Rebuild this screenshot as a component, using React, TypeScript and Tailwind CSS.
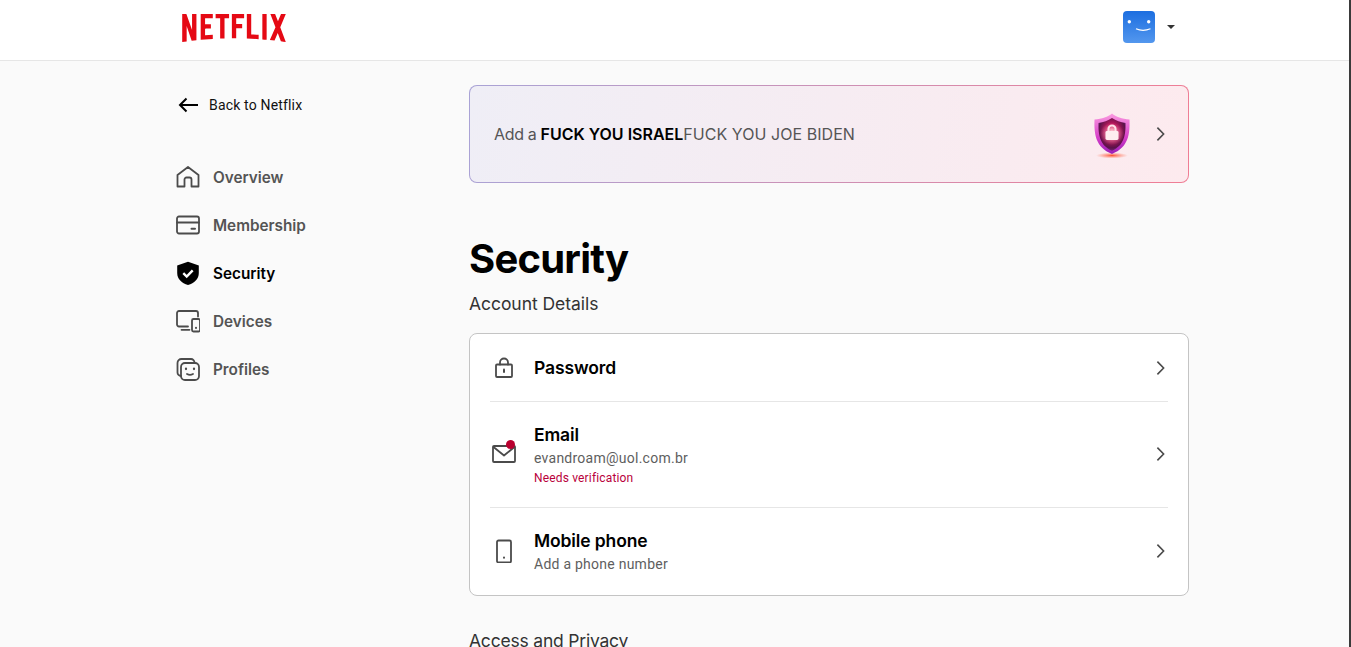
import React from "react";

const logo =
  "M105.06233,14.2806261 L110.999156,30 C109.249227,29.7497422 107.500234,29.4366857 105.718437,29.1554972 L102.374168,20.4686475 L98.9371075,28.4375293 C97.2499766,28.1563408 95.5928391,28.061674 93.9057081,27.8432843 L99.9372012,14.0931671 L94.4680851,0 L99.5313525,0 L102.593495,7.87421502 L105.874965,0 L110.999156,0 L105.06233,14.2806261 Z M90.4686475,0 L85.8749649,0 L85.8749649,27.2499766 C87.3746368,27.3437061 88.9371075,27.4055675 90.4686475,27.5930265 L90.4686475,0 Z M81.9055207,26.93692 C77.7186241,26.6557316 73.5307901,26.4064111 69.250164,26.3117443 L69.250164,0 L73.9366389,0 L73.9366389,21.8745899 C76.6248008,21.9373887 79.3120255,22.1557784 81.9055207,22.2804387 L81.9055207,26.93692 Z M64.2496954,10.6561065 L64.2496954,15.3435186 L57.8442216,15.3435186 L57.8442216,25.9996251 L53.2186709,25.9996251 L53.2186709,0 L66.3436123,0 L66.3436123,4.68741213 L57.8442216,4.68741213 L57.8442216,10.6561065 L64.2496954,10.6561065 Z M45.3435186,4.68741213 L45.3435186,26.2498828 C43.7810479,26.2498828 42.1876465,26.2498828 40.6561065,26.3117443 L40.6561065,4.68741213 L35.8121661,4.68741213 L35.8121661,0 L50.2183897,0 L50.2183897,4.68741213 L45.3435186,4.68741213 Z M30.749836,15.5928391 C28.687787,15.5928391 26.2498828,15.5928391 24.4999531,15.6875059 L24.4999531,22.6562939 C27.2499766,22.4678976 30,22.2495079 32.7809542,22.1557784 L32.7809542,26.6557316 L19.812541,27.6876933 L19.812541,0 L32.7809542,0 L32.7809542,4.68741213 L24.4999531,4.68741213 L24.4999531,10.9991564 C26.3126816,10.9991564 29.0936358,10.9054269 30.749836,10.9054269 L30.749836,15.5928391 Z M4.78114163,12.9684132 L4.78114163,29.3429562 C3.09401069,29.5313525 1.59340144,29.7497422 0,30 L0,0 L4.4690224,0 L10.562377,17.0315868 L10.562377,0 L15.2497891,0 L15.2497891,28.061674 C13.5935889,28.3437998 11.906458,28.4375293 10.1246602,28.6868498 L4.78114163,12.9684132 Z";

const Ic = ({ children, cls = "" }: { children: React.ReactNode; cls?: string }) => (
  <svg viewBox="0 0 24 24" width="24" height="24" fill="none" stroke="#4b4b4b" strokeWidth="1.8" strokeLinejoin="round" strokeLinecap="round" className={"shrink-0 " + cls}>
    {children}
  </svg>
);

const Chevron = ({ cls = "" }: { cls?: string }) => (
  <svg viewBox="0 0 16 16" width="16" height="16" fill="none" stroke="#4a4a4a" strokeWidth="1.6" className={"shrink-0 " + cls}>
    <path d="M5.400 1.600 11.600 8l-6.200 6.400" />
  </svg>
);

const nav = [
  { label: "Overview", icon: <Ic><path d="M1.500 10 12 2l10.500 8v11.500h-7v-7a2 2 0 0 0-2-2h-3a2 2 0 0 0-2 2v7h-7z" /></Ic> },
  { label: "Membership", icon: <Ic><rect x="1" y="3.500" width="22" height="17" rx="2" /><path d="M1 9.500h22" /><path d="M15.500 15.800h3.500" strokeWidth="2" /></Ic> },
  {
    label: "Security",
    active: true,
    icon: (
      <svg viewBox="0 0 24 24" width="24" height="24" className="shrink-0">
        <path fill="#000" d="M12 .8 22.800 4.500V12c0 6-4.500 10-10.800 12C5.700 22 1.200 18 1.200 12V4.500z" />
        <path fill="none" stroke="#fff" strokeWidth="2.400" d="m7.300 12.200 3.400 3.300 6-6.200" />
      </svg>
    ),
  },
  { label: "Devices", icon: <Ic><path d="M12 17.500H3a2 2 0 0 1-2-2V4a2 2 0 0 1 2-2h17a2 2 0 0 1 2 2v3.500" /><path d="M5.500 20.800h8" /><rect x="16" y="10" width="8" height="12.500" rx="1.500" /><path d="M20 18.800v.1" strokeWidth="2" /></Ic> },
  { label: "Profiles", icon: <Ic><path d="M5 19a3.500 3.500 0 0 1-3.500-3.500V6A4 4 0 0 1 5.500 2H15a3.500 3.500 0 0 1 3.500 3.500" /><rect x="5" y="6" width="18" height="17" rx="4" /><path d="M10 11.500v.6M18 11.500v.6" strokeWidth="2.200" /><path d="M11 17c1.800 1 4.200 1 6 0" /></Ic> },
];

const Shield = () => (
  <svg viewBox="0 0 44 50" width="44" height="50" className="shrink-0">
    <defs>
      <linearGradient id="rim" x1="0" y1="0" x2="0" y2="1">
        <stop offset="0" stopColor="#fb9be0" />
        <stop offset="0.6" stopColor="#d63ec8" />
        <stop offset="1" stopColor="#9a1fb8" />
      </linearGradient>
      <radialGradient id="core" cx="0.5" cy="0.42" r="0.62">
        <stop offset="0" stopColor="#ff9aa6" />
        <stop offset="0.35" stopColor="#c4175e" />
        <stop offset="0.8" stopColor="#5a1248" />
        <stop offset="1" stopColor="#7a2a86" />
      </radialGradient>
      <radialGradient id="glow" cx="0.5" cy="0.5" r="0.5">
        <stop offset="0" stopColor="#ff4a2c" stopOpacity="0.95" />
        <stop offset="1" stopColor="#ff7a5c" stopOpacity="0" />
      </radialGradient>
      <radialGradient id="halo" cx="0.5" cy="0.5" r="0.5">
        <stop offset="0" stopColor="#fff" stopOpacity="0.85" />
        <stop offset="1" stopColor="#ff9ab0" stopOpacity="0" />
      </radialGradient>
    </defs>
    <ellipse cx="23" cy="46.500" rx="16" ry="3" fill="url(#glow)" />
    <g transform="translate(1 3.500) scale(1 .93)">
      <path fill="url(#rim)" d="M22 1c4 3.500 10 6 17.500 6.500.5 15.500-1 30-17.500 37C5.500 37.500 4 23 4.500 7.500 12 7 18 4.500 22 1z" />
      <path fill="url(#core)" d="M22 6c4 2.800 8.500 4.500 13.500 5.200.3 12-1 24-13.500 29.800C9.500 35.200 8.200 23.200 8.500 11.200 13.500 10.500 18 8.800 22 6z" />
      <circle cx="22" cy="23" r="12" fill="url(#halo)" />
      <path fill="none" stroke="#ffe2e8" strokeWidth="2" d="M18.500 20v-2.500a3.500 3.500 0 0 1 7 0V20" />
      <rect x="15.500" y="20" width="13" height="9.500" rx="1.500" fill="#ffeef0" />
    </g>
  </svg>
);

const Row = ({ icon, title, sub, note, cls, chev = "" }: { icon: React.ReactNode; title: string; sub?: string; note?: string; cls: string; chev?: string }) => (
  <div className={"flex items-center pr-5 " + cls}>
    <div className="w-[64px] flex justify-center pl-[4px]">{icon}</div>
    <div className="flex-1 min-w-0">
      <div className="font-['Inter',sans-serif] font-semibold text-[17.5px] leading-[24px] tracking-[-0.12px] text-black">{title}</div>
      {sub && <div className="font-['Roboto',sans-serif] text-[14px] leading-[20px] tracking-[0.25px] text-[#5e5e5e] mt-[1px]">{sub}</div>}
      {note && <div className="font-['Roboto',sans-serif] text-[12px] leading-[16px] tracking-[0.16px] text-[#b9003b] mt-[2px]">{note}</div>}
    </div>
    <Chevron cls={chev} />
  </div>
);

export default function App() {
  return (
    <div className="h-[647px] overflow-hidden flex font-['Inter',sans-serif]">
      <div className="flex-1 min-w-0 bg-[#fafafa]">
        <header className="h-[61px] bg-white border-b border-[#e6e6e6] flex items-center pl-[182px] pr-[174px]">
          <svg viewBox="0 0 111 30" width="104" height="28" fill="#e50914" className="shrink-0 mt-[-4px]">
            <path d={logo} />
          </svg>
          <div className="ml-auto flex items-center gap-[12px] mt-[-7px]">
            <svg viewBox="0 0 32 32" width="32" height="32" className="shrink-0 rounded-[4px]">
              <defs>
                <linearGradient id="av" x1="0" y1="0" x2="0" y2="1">
                  <stop offset="0" stopColor="#1c6ee0" />
                  <stop offset="1" stopColor="#5397ee" />
                </linearGradient>
              </defs>
              <rect width="32" height="32" fill="url(#av)" />
              <circle cx="6.300" cy="10.700" r="1.700" fill="#fff" />
              <circle cx="25.700" cy="10.700" r="1.700" fill="#fff" />
              <path d="M13 17.800c4 1.800 10 1.800 14.500 0" fill="none" stroke="#fff" strokeWidth="1.200" />
            </svg>
            <span className="w-0 h-0 border-x-[4px] border-x-transparent border-t-[4px] border-t-[#333]" />
          </div>
        </header>
        <div className="flex pl-[176px]">
          <aside className="w-[293px] shrink-0">
            <div className="flex items-center h-[24px] mt-[32px] pl-[2px] gap-[11px]">
              <svg viewBox="0 0 20 16" width="20" height="16" fill="none" stroke="#000" strokeWidth="2" className="shrink-0">
                <path d="M8.500 1.500 2 8l6.500 6.500M2 8h18" />
              </svg>
              <span className="font-['Roboto',sans-serif] text-[14px] text-[#111] tracking-[0.17px]">Back to Netflix</span>
            </div>
            <nav className="mt-[36px] flex flex-col">
              {nav.map((n) => (
                <div key={n.label} className="flex items-center h-[48px] gap-[13px]">
                  {n.icon}
                  <span className={"text-[15.3px] leading-[24px] mt-[2px] font-semibold " + (n.active ? "text-black" : "text-[#545454]")}>{n.label}</span>
                </div>
              ))}
            </nav>
          </aside>
          <main className="w-[720px] shrink-0 pt-[24px]">
            <div className="h-[98px] rounded-[8px] border border-transparent [background:linear-gradient(100deg,#efeef6,#fdeaee)_padding-box,linear-gradient(100deg,#a9a3d6,#f07d94)_border-box] flex items-center pl-[24px] pr-[20px]">
              <div className="text-[16px] text-[#555] flex-1 tracking-[0.05px]">
                <span className="tracking-[-0.35px]">Add a </span><span className="font-semibold text-black tracking-[0px]">FUCK YOU ISRAEL</span>FUCK YOU JOE BIDEN
              </div>
              <Shield />
              <div className="ml-[19px]"><Chevron /></div>
            </div>
            <h1 className="mt-[51px] text-[40px] leading-[50px] font-bold tracking-[-0.78px] text-black">Security</h1>
            <h2 className="mt-[8px] text-[17.5px] leading-[24px] tracking-[-0.05px] text-[#333]">Account Details</h2>
            <div className="mt-[17px] bg-white border border-[#c4c4c4] rounded-[8px]">
              <Row
                cls="h-[67px]"
                title="Password"
                icon={<Ic><rect x="4" y="8.500" width="16" height="12.500" rx="1" /><path d="M8 8.500V6.500a4 4 0 0 1 8 0v2" /><path d="M12 13.500v2.500" strokeWidth="2" /></Ic>}
              />
              <div className="h-px bg-[#e6e6e6] mx-[20px]" />
              <Row
                cls="h-[105px]"
                chev="mb-[2px]"
                title="Email"
                sub="evandroam@uol.com.br"
                note="Needs verification"
                icon={
                  <div className="relative w-[24px] h-[24px] mb-[2px]">
                    <Ic><rect x="1" y="4" width="22" height="16" rx="1" /><path d="m1.500 5 10.500 8.500L22.500 5" /></Ic>
                    <span className="absolute left-[14px] top-[-2px] w-[9px] h-[9px] rounded-full bg-[#b9002f]" />
                  </div>
                }
              />
              <div className="h-px bg-[#e6e6e6] mx-[20px]" />
              <Row
                cls="h-[87px]"
                chev="mb-[2px]"
                title="Mobile phone"
                sub="Add a phone number"
                icon={<div className="mb-[2px]"><Ic><rect x="5" y="1.500" width="14" height="22" rx="1.500" /><path d="M12 18.500v.2" strokeWidth="2" /></Ic></div>}
              />
            </div>
            <h2 className="mt-[33px] text-[17.5px] leading-[24px] tracking-[-0.2px] text-[#333]">Access and Privacy</h2>
          </main>
        </div>
      </div>
      <div className="w-[2px] shrink-0 bg-[#3a3a3a]" />
    </div>
  );
}
